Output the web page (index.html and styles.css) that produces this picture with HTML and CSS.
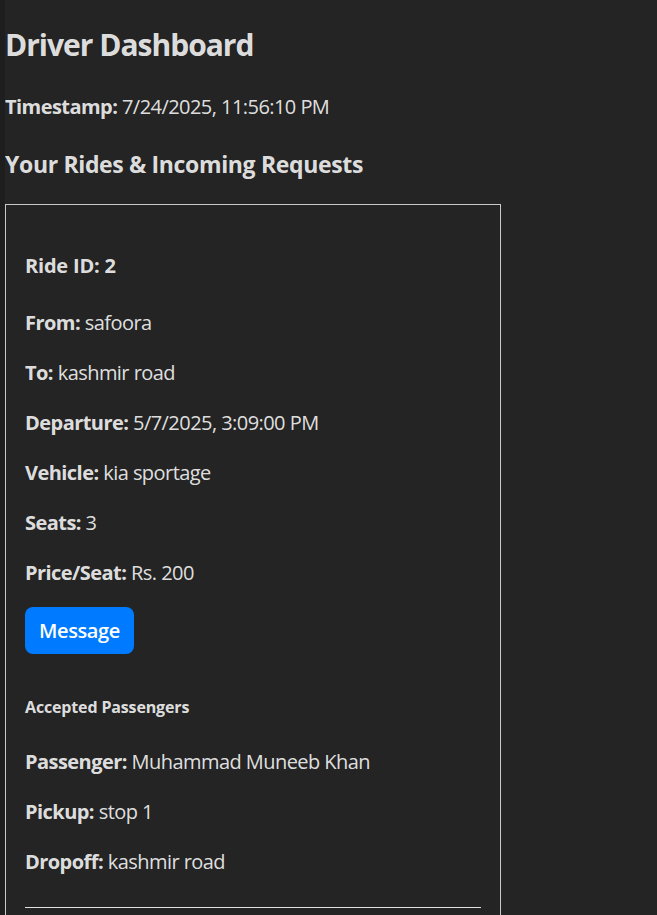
FILE: index.html
```html
<!DOCTYPE html>
<html lang="en">
<head>
<meta charset="utf-8">
<title>Driver Dashboard</title>
<link rel="stylesheet" href="styles.css">
</head>
<body>
<div class="app">
  <h1 class="title">Driver Dashboard</h1>
  <p class="stamp"><strong>Timestamp:</strong> 7/24/2025, 11:56:10 PM</p>
  <h2 class="section">Your Rides &amp; Incoming Requests</h2>
  <div class="card">
    <h3 class="ride-id">Ride ID: 2</h3>
    <p class="row first"><strong>From:</strong> safoora</p>
    <p class="row"><strong>To:</strong> kashmir road</p>
    <p class="row"><strong>Departure:</strong> 5/7/2025, 3:09:00 PM</p>
    <p class="row"><strong>Vehicle:</strong> kia sportage</p>
    <p class="row"><strong>Seats:</strong> 3</p>
    <p class="row"><strong>Price/Seat:</strong> Rs. 200</p>
    <button class="btn" type="button">Message</button>
    <h4 class="sub">Accepted Passengers</h4>
    <p class="row first"><strong>Passenger:</strong> Muhammad Muneeb Khan</p>
    <p class="row"><strong>Pickup:</strong> stop 1</p>
    <p class="row"><strong>Dropoff:</strong> kashmir road</p>
    <hr class="divider">
    <p class="row">&nbsp;</p>
  </div>
</div>
</body>
</html>
```

FILE: styles.css
```css
html, body {
  margin: 0;
  padding: 0;
}
body {
  background: #242424;
  color: rgba(255, 255, 255, 0.87);
  font-family: "Open Sans", "Noto Sans", sans-serif;
  font-size: 20px;
  line-height: 30px;
  letter-spacing: -0.55px;
  border-left: 5px solid #1e1e1e;
  min-height: 915px;
  box-sizing: border-box;
}
.app {
  display: flex;
  flex-direction: column;
  align-items: flex-start;
}
.title {
  font-size: 30px;
  line-height: 40px;
  font-weight: 700;
  letter-spacing: -1px;
  margin: 25px 0 0;
}
.stamp {
  margin: 27px 0 0;
}
.section {
  font-size: 23px;
  line-height: 30px;
  font-weight: 700;
  letter-spacing: -0.35px;
  margin: 27px 0 0;
}
.card {
  margin-top: 25px;
  width: 496px;
  box-sizing: border-box;
  border: 1px solid #c8c8c8;
  padding: 46px 19px 0;
}
.ride-id {
  font-size: 20px;
  line-height: 30px;
  font-weight: 700;
  letter-spacing: -0.2px;
  margin: 0;
}
.row {
  margin: 20px 0 0;
}
.row.first {
  margin-top: 27px;
}
strong {
  font-weight: 700;
}
.btn {
  display: block;
  margin-top: 19px;
  height: 47px;
  padding: 0 14px;
  border: 0;
  border-radius: 8px;
  background: #007bff;
  color: #fff;
  font-family: inherit;
  font-size: 20px;
  font-weight: 600;
  letter-spacing: -0.4px;
}
.sub {
  font-size: 16px;
  line-height: 24px;
  font-weight: 700;
  letter-spacing: -0.15px;
  margin: 41px 0 0;
}
.sub + .row.first {
  margin-top: 28px;
}
.divider {
  margin: 30px 0 0;
  border: 0;
  border-top: 1px solid #e0e0e0;
  height: 0;
}
```
